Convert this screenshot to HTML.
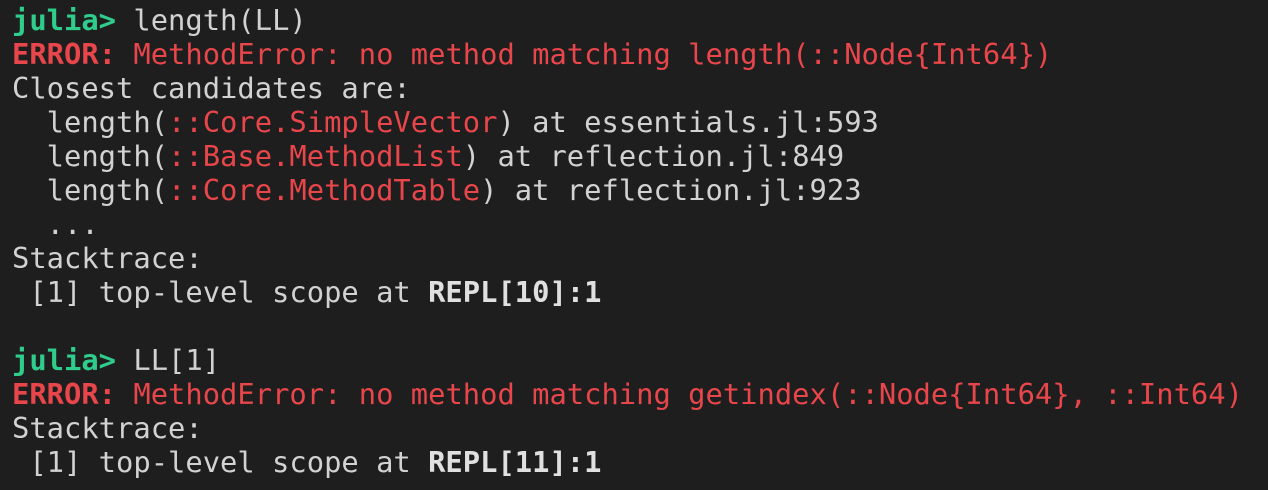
<!DOCTYPE html>
<html><head><meta charset="utf-8"><style>
html,body{margin:0;padding:0;background:#1e1e1e;width:1268px;height:490px;overflow:hidden}
pre{margin:0;padding:3px 0 0 12px;font-family:"DejaVu Sans Mono","Liberation Mono",monospace;font-size:28.8px;line-height:34px;color:#d2d2d2;white-space:pre}
.g{color:#2fcc8b;font-weight:bold}
.r{color:#e8464b}
.rb{color:#e8464b;font-weight:bold}
b{color:#e0e0e0}
</style></head><body><pre><span class="g">julia&gt;</span> length(LL)
<span class="rb">ERROR:</span><span class="r"> MethodError: no method matching length(::Node{Int64})</span>
Closest candidates are:
  length(<span class="r">::Core.SimpleVector</span>) at essentials.jl:593
  length(<span class="r">::Base.MethodList</span>) at reflection.jl:849
  length(<span class="r">::Core.MethodTable</span>) at reflection.jl:923
  ...
Stacktrace:
 [1] top-level scope at <b>REPL[10]:1</b>

<span class="g">julia&gt;</span> LL[1]
<span class="rb">ERROR:</span><span class="r"> MethodError: no method matching getindex(::Node{Int64}, ::Int64)</span>
Stacktrace:
 [1] top-level scope at <b>REPL[11]:1</b>
</pre></body></html>
